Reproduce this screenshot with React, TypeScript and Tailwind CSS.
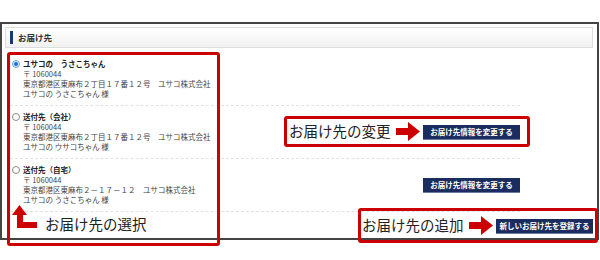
const addresses = [
  {
    id: "self",
    title: "ユサコの　うさこちゃん",
    zip: "〒 1060044",
    address: "東京都港区東麻布２丁目１７番１２号　ユサコ株式会社",
    name: "ユサコの うさこちゃん 様",
    checked: true,
    editable: false,
  },
  {
    id: "office",
    title: "送付先（会社）",
    zip: "〒 1060044",
    address: "東京都港区東麻布２丁目１７番１２号　ユサコ株式会社",
    name: "ユサコの ウサコちゃん 様",
    checked: false,
    editable: true,
  },
  {
    id: "home",
    title: "送付先（自宅）",
    zip: "〒 1060044",
    address: "東京都港区東麻布２－１７－１２　ユサコ株式会社",
    name: "ユサコの うさこちゃん 様",
    checked: false,
    editable: true,
  },
];

function RightArrow() {
  return (
    <svg width="24" height="19" viewBox="0 0 24 19">
      <polygon points="0,6 12,6 12,0 24,9.5 12,19 12,13 0,13" fill="#cc0000" />
    </svg>
  );
}

function Radio({ checked }: { checked: boolean }) {
  return checked ? (
    <span className="flex size-[8px] items-center justify-center rounded-full border border-[#7aa7e0] bg-[#dbe8fa]">
      <span className="size-[4px] rounded-full bg-[#1e6fd9]" />
    </span>
  ) : (
    <span className="block size-[8px] rounded-full border border-[#8a8a8a] bg-white" />
  );
}

function NavyButton({ label }: { label: string }) {
  return (
    <button className="flex h-[15px] w-[97px] items-center justify-center border-b border-[#6d7ba3] bg-[#1b2c5e] text-[7.5px] font-bold leading-none text-white">
      {label}
    </button>
  );
}

export default function App() {
  return (
    <div className="relative h-[260px] w-[600px] overflow-hidden bg-white pt-[22px] font-['Noto_Sans_CJK_JP','Noto_Sans',sans-serif]">
      <div className="w-[599px] border-2 border-[#444]">
        <div className="mx-[3px] mr-[4px] mt-[3px] flex h-[21px] items-center gap-[5px] border border-[#dddddd] bg-gradient-to-b from-white to-[#f1f1f1] pl-[4px]">
          <span className="h-[13px] w-[3px] bg-[#1a3a6e]" />
          <span className="text-[8.5px] font-bold text-[#333]">お届け先</span>
        </div>

        <div className="ml-[8px] mt-[5px] w-[510px]">
          {addresses.map((a) => (
            <div
              key={a.id}
              className="flex items-center justify-between border-b border-dashed border-[#e2e2e2] py-[6px]"
            >
              <div className="flex gap-[3px] pl-[2px]">
                <div className="pt-[1px]">
                  <Radio checked={a.checked} />
                </div>
                <div className="text-[7.5px] leading-[10px] text-[#444]">
                  <div className="font-bold text-[#222]">{a.title}</div>
                  <div>{a.zip}</div>
                  <div>{a.address}</div>
                  <div>{a.name}</div>
                </div>
              </div>
              {a.editable && <NavyButton label="お届け先情報を変更する" />}
            </div>
          ))}
        </div>

        <div className="flex justify-end pb-[4px] pr-[4px] pt-[7px]">
          <NavyButton label="新しいお届け先を登録する" />
        </div>
      </div>

      {/* callouts */}
      <div className="pointer-events-none absolute left-[7px] top-[52px] h-[194px] w-[213px] rounded-[3px] border-[3px] border-[#cc0000]" />
      <div className="pointer-events-none absolute left-[284px] top-[116px] h-[31px] w-[246px] rounded-[3px] border-[3px] border-[#cc0000]" />
      <div className="pointer-events-none absolute left-[358px] top-[208px] h-[35px] w-[240px] rounded-[3px] border-[3px] border-[#cc0000]" />

      <div className="absolute left-[289px] top-[121px] flex items-center gap-[5px]">
        <span className="text-[14.5px] leading-[20px] text-[#222]">お届け先の変更</span>
        <RightArrow />
      </div>

      <div className="absolute left-[362px] top-[215px] flex items-center gap-[5px]">
        <span className="text-[14.5px] leading-[20px] text-[#222]">お届け先の追加</span>
        <RightArrow />
      </div>

      <div className="absolute left-[12px] top-[205px]">
        <svg width="26" height="24" viewBox="0 0 26 24">
          <polygon points="7.5,0 15,10 11,10 11,17 25,17 25,23 5,23 5,10 0,10" fill="#cc0000" />
        </svg>
      </div>
      <span className="absolute left-[45px] top-[214px] text-[14.5px] leading-[20px] text-[#222]">
        お届け先の選択
      </span>
    </div>
  );
}
